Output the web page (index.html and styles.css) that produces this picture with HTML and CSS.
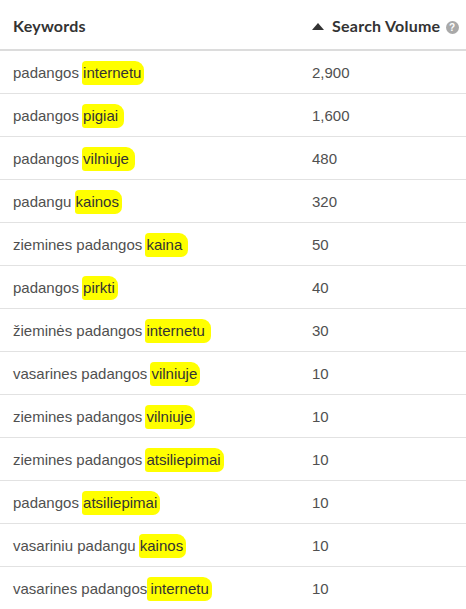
FILE: index.html
```html
<!DOCTYPE html>
<html>
<head>
<meta charset="utf-8">
<link rel="stylesheet" href="styles.css">
</head>
<body>
<table class="kw-table">
  <thead>
    <tr>
      <th class="col-kw">Keywords</th>
      <th class="col-vol"><span class="sort-up"></span>Search Volume <span class="help">?</span></th>
    </tr>
  </thead>
  <tbody>
    <tr><td>padangos <span class="hl">internetu</span></td><td>2,900</td></tr>
    <tr><td>padangos <span class="hl wide">pigiai</span></td><td>1,600</td></tr>
    <tr><td>padangos <span class="hl wide">vilniuje</span></td><td>480</td></tr>
    <tr><td>padangu <span class="hl">kainos</span></td><td>320</td></tr>
    <tr><td>ziemines padangos <span class="hl wide">kaina</span></td><td>50</td></tr>
    <tr><td>padangos <span class="hl">pirkti</span></td><td>40</td></tr>
    <tr><td>žieminės padangos <span class="hl wide">internetu</span></td><td>30</td></tr>
    <tr><td>vasarines padangos <span class="hl">vilniuje</span></td><td>10</td></tr>
    <tr><td>ziemines padangos <span class="hl">vilniuje</span></td><td>10</td></tr>
    <tr><td>ziemines padangos <span class="hl">atsiliepimai</span></td><td>10</td></tr>
    <tr><td>padangos <span class="hl">atsiliepimai</span></td><td>10</td></tr>
    <tr><td>vasariniu padangu <span class="hl">kainos</span></td><td>10</td></tr>
    <tr><td>vasarines padangos <span class="hl lead">internetu</span></td><td>10</td></tr>
  </tbody>
</table>
</body>
</html>
```

FILE: styles.css
```css
html, body {
  margin: 0;
  padding: 0;
  background: #ffffff;
}
.kw-table {
  width: 466px;
  border-collapse: collapse;
  font-family: "Liberation Sans", Arial, sans-serif;
  font-size: 15px;
  color: #505050;
}
.kw-table th {
  font-family: Lato, "Liberation Sans", sans-serif;
  font-weight: 700;
  font-size: 16px;
  letter-spacing: 0.25px;
  color: #333333;
  text-align: left;
  height: 47px;
  padding: 2px 0 0 13px;
  border-bottom: 2px solid #dcdcdc;
  vertical-align: middle;
  white-space: nowrap;
}
.kw-table th.col-vol {
  width: 154px;
  padding-left: 0;
}
.kw-table td {
  height: 42px;
  padding: 0 0 0 13px;
  border-bottom: 1px solid #e2e2e2;
  vertical-align: middle;
  white-space: nowrap;
}
.kw-table td:nth-child(2) {
  padding-left: 0;
  width: 154px;
}
.sort-up {
  display: inline-block;
  width: 0;
  height: 0;
  border-left: 6px solid transparent;
  border-right: 6px solid transparent;
  border-bottom: 7px solid #333333;
  margin-right: 8px;
  vertical-align: 2px;
}
.help {
  display: inline-block;
  width: 13px;
  height: 13px;
  border-radius: 50%;
  background: #a9a9a9;
  color: #ffffff;
  font-family: "Liberation Sans", Arial, sans-serif;
  font-size: 10px;
  font-weight: 700;
  letter-spacing: 0;
  line-height: 13px;
  text-align: center;
  vertical-align: 1px;
  margin-left: 1px;
}
.hl {
  background: #ffff00;
  color: #333333;
  padding: 3px 3px 4px 1px;
  margin-left: -1px;
  border-radius: 4px 9px 7px 3px;
}
.hl.wide {
  padding-right: 6px;
}
.hl.lead {
  padding-left: 3px;
  margin-left: -4px;
}
```
